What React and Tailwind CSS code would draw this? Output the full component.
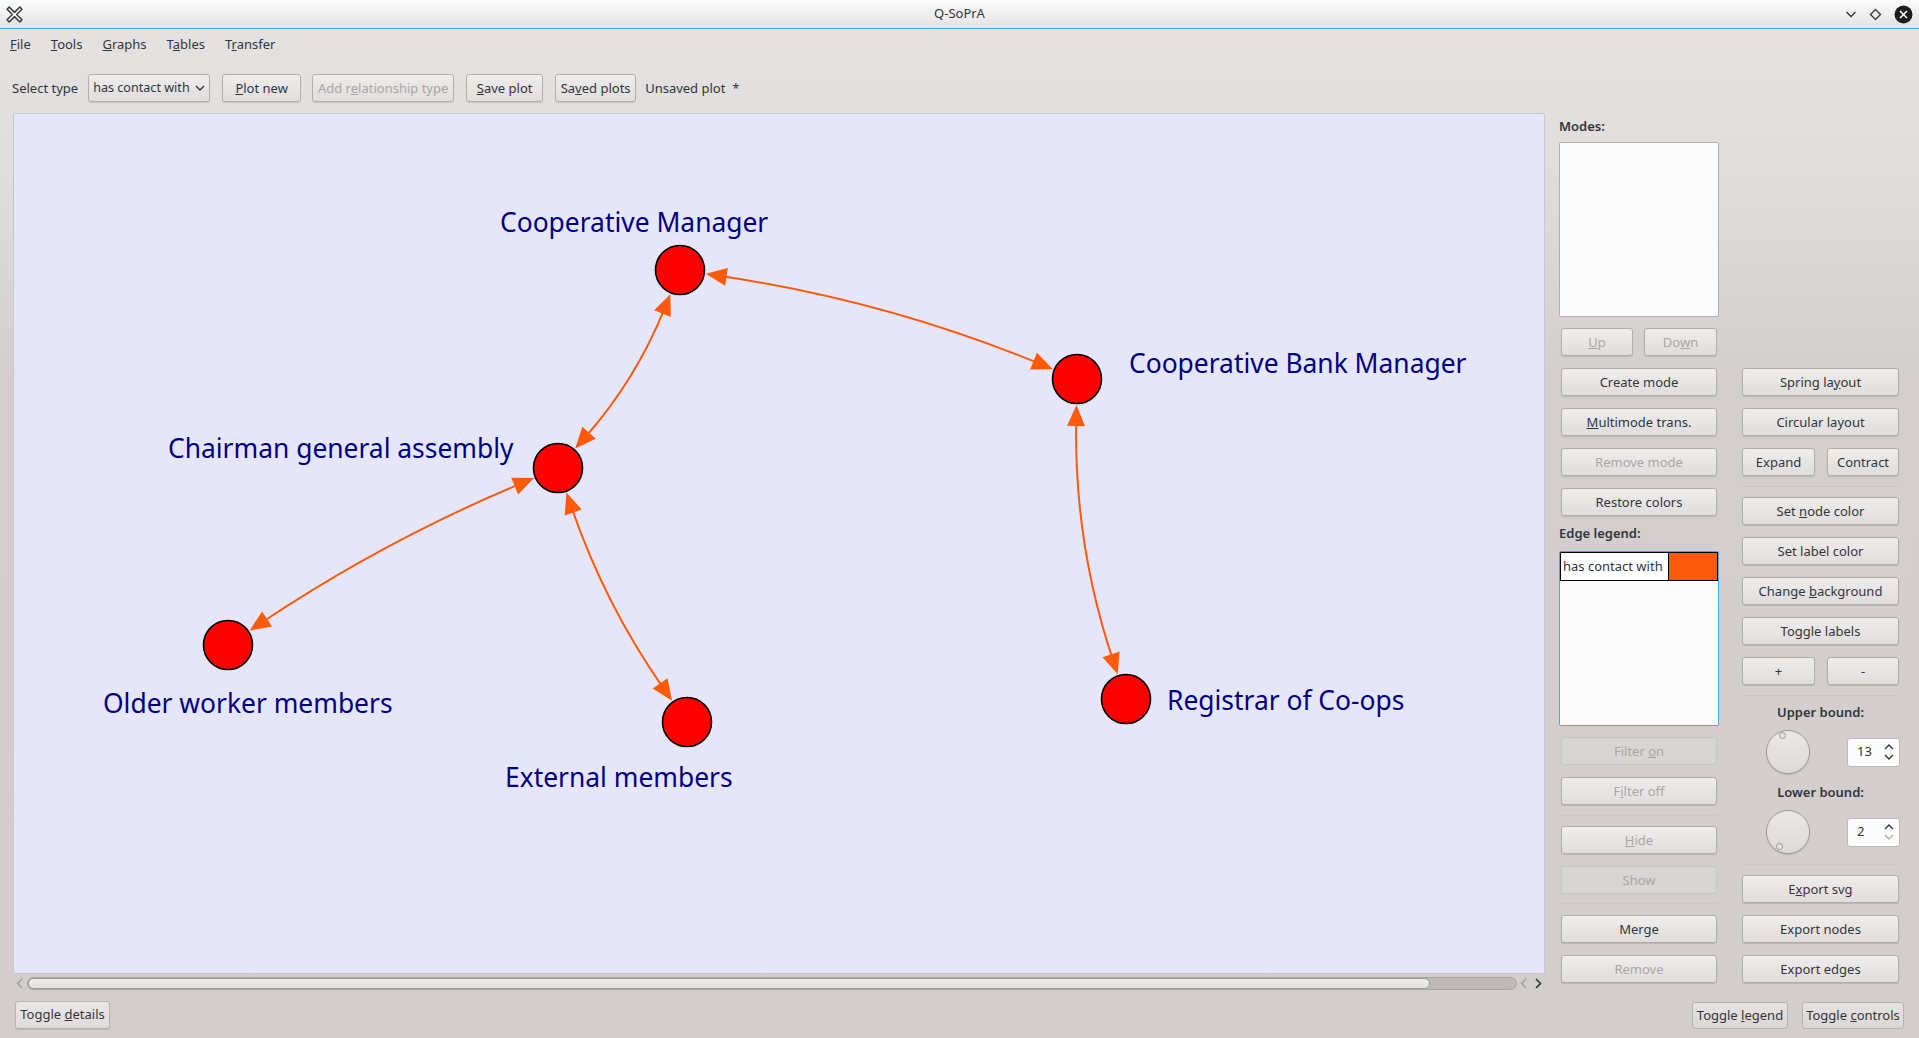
import clsx from 'clsx';

// node centres in window coordinates
const nodes = {
  cm: { x: 680, y: 270, label: 'Cooperative Manager', lx: 500, ly: 232 },
  cbm: { x: 1077, y: 379, label: 'Cooperative Bank Manager', lx: 1129, ly: 373 },
  ch: { x: 558, y: 468, label: 'Chairman general assembly', lx: 168, ly: 458 },
  old: { x: 228, y: 645, label: 'Older worker members', lx: 103, ly: 713 },
  ext: { x: 687, y: 722, label: 'External members', lx: 505, ly: 787 },
  reg: { x: 1126, y: 699, label: 'Registrar of Co-ops', lx: 1167, ly: 710 },
};

const edges = [
  ['cm', 'cbm', -25],
  ['cm', 'ch', -20],
  ['ch', 'old', 18],
  ['ch', 'ext', 20],
  ['cbm', 'reg', 28],
];

const R = 26;
const EDGE = '#ff5a0a';

function edgeGeom(a, b, h) {
  const A = nodes[a];
  const B = nodes[b];
  const dx = B.x - A.x;
  const dy = B.y - A.y;
  const L = Math.hypot(dx, dy);
  const cx = (A.x + B.x) / 2 + (-dy / L) * h;
  const cy = (A.y + B.y) / 2 + (dx / L) * h;

  const end = (n) => {
    const vx = n.x - cx;
    const vy = n.y - cy;
    const l = Math.hypot(vx, vy);
    const ux = vx / l;
    const uy = vy / l;
    const tx = n.x - ux * R;
    const ty = n.y - uy * R;
    const bx = tx - ux * 21;
    const by = ty - uy * 21;
    const pts = `${tx},${ty} ${bx - uy * 9},${by + ux * 9} ${bx + uy * 9},${by - ux * 9}`;
    return { bx: tx - ux * 15, by: ty - uy * 15, pts };
  };

  const s = end(A);
  const e = end(B);
  return { d: `M${s.bx},${s.by} Q${cx},${cy} ${e.bx},${e.by}`, heads: [s.pts, e.pts] };
}

const Btn = ({ children, disabled, flat, className = '' }) => (
  <button
    className={clsx(
      'flex h-[28px] items-center justify-center rounded-[3px] border text-[13px] leading-none',
      disabled ? 'text-[#a9a6a5]' : 'text-[#31363b]',
      flat
        ? 'border-[#c9c4c2] bg-[#d9d5d4]'
        : 'border-[#b3aeac] bg-gradient-to-b from-[#efedec] to-[#e0dddc] shadow-[0_1px_1px_rgba(0,0,0,0.12)]',
      className
    )}
  >
    {children}
  </button>
);

const Sep = () => <div className="h-px bg-[#cbc5c4]" />;

const Dial = ({ notch }) => (
  <div className="relative h-[44px] w-[44px] rounded-full border border-[#a29d9b] bg-gradient-to-b from-[#ebe9e8] to-[#dcd9d8] shadow-[0_1px_1px_rgba(0,0,0,0.15)]">
    <div
      className={clsx(
        'absolute h-[7px] w-[7px] rounded-full border border-[#9d9896] bg-[#e4e1e0]',
        notch === 'top' ? 'left-[12px] top-[1px]' : 'left-[9px] top-[32px]'
      )}
    />
  </div>
);

const Spin = ({ value, downOff }) => (
  <div className="flex h-[29px] w-[53px] items-center justify-between rounded-[3px] border border-[#bdb8b6] bg-[#fcfcfc] pl-[9px] pr-[5px] text-[13px] text-[#31363b]">
    <span>{value}</span>
    <svg width="10" height="18" viewBox="0 0 10 18" fill="none" strokeWidth="1.4">
      <path d="M1 6 L5 2 L9 6" stroke="#31363b" />
      <path d="M1 12 L5 16 L9 12" stroke={downOff ? '#b0acab' : '#31363b'} />
    </svg>
  </div>
);

const Chevron = ({ dir, color }) => (
  <svg width="14" height="13" viewBox="0 0 14 13" fill="none">
    <path
      d={dir === 'left' ? 'M9 2 L4.5 6.5 L9 11' : 'M5 2 L9.5 6.5 L5 11'}
      stroke={color}
      strokeWidth="1.6"
    />
  </svg>
);

export default function App() {
  return (
    <div className="flex h-[1038px] w-[1919px] flex-col overflow-hidden bg-[linear-gradient(180deg,#e5e3e2_0px,#e0dddc_160px,#d4cfce_380px,#d3cdcc_100%)] font-['Noto_Sans',sans-serif] text-[13px] text-[#31363b]">
      {/* title bar */}
      <div className="relative flex h-[29px] shrink-0 items-center justify-between border-b border-[#3daee9] bg-gradient-to-b from-[#fcfcfc] to-[#e4e2e1] px-[6px]">
        <svg width="17" height="17" viewBox="0 0 16 16">
          <path
            d="M1 3 L3 1 L8 6 L13 1 L15 3 L10 8 L15 13 L13 15 L8 10 L3 15 L1 13 L6 8 Z"
            fill="#fff"
            stroke="#31363b"
            strokeWidth="1.4"
            strokeLinejoin="round"
          />
        </svg>
        <div className="absolute inset-x-0 text-center text-[13px]">Q-SoPrA</div>
        <div className="relative flex items-center gap-[12px]">
          <svg width="12" height="12" viewBox="0 0 12 12" fill="none">
            <path d="M1.5 4 L6 8.5 L10.5 4" stroke="#31363b" strokeWidth="1.3" />
          </svg>
          <svg width="13" height="13" viewBox="0 0 13 13" fill="none">
            <path d="M6.5 1.5 L11.5 6.5 L6.5 11.5 L1.5 6.5 Z" stroke="#31363b" strokeWidth="1.3" />
          </svg>
          <svg width="19" height="19" viewBox="0 0 19 19">
            <circle cx="9.5" cy="9.5" r="9" fill="#1b1d1f" />
            <path d="M6 6 L13 13 M13 6 L6 13" stroke="#fff" strokeWidth="1.6" />
          </svg>
        </div>
      </div>

      {/* menu bar */}
      <div className="flex h-[29px] shrink-0 items-center gap-[20px] pl-[10px] pt-[2px]">
        <span><u>F</u>ile</span>
        <span><u>T</u>ools</span>
        <span><u>G</u>raphs</span>
        <span>T<u>a</u>bles</span>
        <span>T<u>r</u>ansfer</span>
      </div>

      {/* toolbar */}
      <div className="flex h-[55px] shrink-0 items-start pl-[12px] pt-[16px]">
        <span className="mt-[5px]">Select type</span>
        <button className="ml-[10px] flex h-[28px] w-[122px] items-center justify-between rounded-[3px] border border-[#b3aeac] bg-gradient-to-b from-[#efedec] to-[#e0dddc] pl-[4px] pr-[4px] text-[12.6px] shadow-[0_1px_1px_rgba(0,0,0,0.12)]">
          <span>has contact with</span>
          <svg width="10" height="8" viewBox="0 0 10 8" fill="none">
            <path d="M1 2 L5 6 L9 2" stroke="#31363b" strokeWidth="1.4" />
          </svg>
        </button>
        <Btn className="ml-[12px] w-[79px]"><span><u>P</u>lot new</span></Btn>
        <Btn disabled className="ml-[11px] w-[142px]"><span>Add r<u>e</u>lationship type</span></Btn>
        <Btn className="ml-[12px] w-[77px]"><span><u>S</u>ave plot</span></Btn>
        <Btn className="ml-[12px] w-[81px]"><span>Sa<u>v</u>ed plots</span></Btn>
        <span className="ml-[9px] mt-[5px]">Unsaved plot&nbsp; *</span>
      </div>

      {/* main */}
      <div className="flex min-h-0 flex-1">
        <div className="flex w-[1545px] shrink-0 flex-col pl-[13px]">
          <div className="h-[861px] overflow-hidden rounded-[2px] border border-[#c8c6d6] bg-[#e6e6fa]">
            <svg width="1530" height="859" className="block">
              <g transform="translate(-14,-114)">
                {edges.map(([a, b, h]) => {
                  const g = edgeGeom(a, b, h);
                  return (
                    <g key={a + b}>
                      <path d={g.d} fill="none" stroke={EDGE} strokeWidth="2" />
                      {g.heads.map((p) => (
                        <polygon key={p} points={p} fill={EDGE} />
                      ))}
                    </g>
                  );
                })}
                {Object.entries(nodes).map(([k, n]) => (
                  <g key={k}>
                    <circle cx={n.x} cy={n.y} r="24.5" fill="#ff0000" stroke="#000" strokeWidth="1.6" />
                    <text
                      x={n.lx}
                      y={n.ly}
                      fill="#000080"
                      fontSize="26.4"
                      fontFamily="'Noto Sans', sans-serif"
                    >
                      {n.label}
                    </text>
                  </g>
                ))}
              </g>
            </svg>
          </div>
          {/* scrollbar */}
          <div className="mt-[3px] flex h-[13px] items-center">
            <Chevron dir="left" color="#a7a3a2" />
            <div className="h-[13px] flex-1 rounded-full border border-[#aaa4a2] bg-[#bfb9b8]">
              <div className="h-full w-[1402px] rounded-full border border-[#9f9997] bg-gradient-to-b from-[#f1efee] to-[#e2dfde]" />
            </div>
            <Chevron dir="left" color="#a7a3a2" />
            <Chevron dir="right" color="#31363b" />
          </div>
          <div className="mt-[11px] flex">
            <button className="ml-[2px] flex h-[28px] w-[95px] items-center justify-center rounded-[3px] border border-[#b8b3b1] bg-gradient-to-b from-[#eae8e7] to-[#dedbda] text-[13px] shadow-[0_1px_1px_rgba(0,0,0,0.1)]">
              <span>Toggle <u>d</u>etails</span>
            </button>
          </div>
        </div>

        {/* right panel */}
        <div className="flex flex-1 flex-col">
          <div className="flex pl-[14px]">
            {/* left column */}
            <div className="flex w-[160px] flex-col pt-[5px]">
              <div className="h-[16px] font-semibold leading-[16px]">Modes:</div>
              <div className="mt-[8px] h-[175px] rounded-[2px] border border-[#b4afad] bg-[#fbfbfb]" />
              <div className="mt-[11px] flex justify-between px-[2px]">
                <Btn disabled className="w-[72px]"><span><u>U</u>p</span></Btn>
                <Btn disabled className="w-[73px]"><span>Do<u>w</u>n</span></Btn>
              </div>
              <div className="mt-[12px] flex flex-col gap-[12px] px-[2px]">
                <Btn>Create mode</Btn>
                <Btn><span><u>M</u>ultimode trans.</span></Btn>
                <Btn disabled>Remove mode</Btn>
                <Btn>Restore colors</Btn>
              </div>
              <div className="mt-[9px] h-[16px] font-semibold leading-[16px]">Edge legend:</div>
              <div className="mt-[10px] h-[175px] overflow-hidden rounded-[2px] border border-[#3daee9] bg-[#fcfcfc]">
                <div className="flex h-[29px]">
                  <div className="flex w-[109px] items-center border border-black bg-white pl-[2px] text-[13px]">
                    has contact with
                  </div>
                  <div className="flex-1 border-y border-r border-black bg-[#ff5a0a]" />
                </div>
              </div>
              <div className="mt-[11px] flex flex-col px-[2px]">
                <Btn disabled flat><span>Filter <u>o</u>n</span></Btn>
                <Btn disabled className="mt-[12px]"><span>F<u>i</u>lter off</span></Btn>
                <div className="mt-[10px]"><Sep /></div>
                <Btn disabled className="mt-[10px]"><span><u>H</u>ide</span></Btn>
                <Btn disabled flat className="mt-[12px]">Show</Btn>
                <div className="mt-[9px]"><Sep /></div>
                <Btn className="mt-[11px]">Merge</Btn>
                <Btn disabled className="mt-[12px]">Remove</Btn>
              </div>
            </div>

            {/* right column */}
            <div className="ml-[23px] flex w-[157px] flex-col pt-[255px]">
              <div className="flex flex-col gap-[12px]">
                <Btn><span>Spring la<u>y</u>out</span></Btn>
                <Btn>Circular layout</Btn>
                <div className="flex justify-between">
                  <Btn className="w-[73px]">Expand</Btn>
                  <Btn className="w-[72px]">Contract</Btn>
                </div>
              </div>
              <div className="mt-[10px]"><Sep /></div>
              <div className="mt-[10px] flex flex-col gap-[12px]">
                <Btn><span>Set <u>n</u>ode color</span></Btn>
                <Btn>Set label color</Btn>
                <Btn><span>Change <u>b</u>ackground</span></Btn>
                <Btn>Toggle labels</Btn>
                <div className="flex justify-between">
                  <Btn className="w-[73px]">+</Btn>
                  <Btn className="w-[72px]">-</Btn>
                </div>
              </div>
              <div className="mt-[10px]"><Sep /></div>
              <div className="mt-[8px] h-[16px] text-center font-semibold leading-[16px]">Upper bound:</div>
              <div className="mt-[10px] flex h-[44px] items-center">
                <div className="ml-[24px]"><Dial notch="top" /></div>
                <div className="ml-[37px]"><Spin value="13" /></div>
              </div>
              <div className="mt-[10px] h-[16px] text-center font-semibold leading-[16px]">Lower bound:</div>
              <div className="mt-[10px] flex h-[44px] items-center">
                <div className="ml-[24px]"><Dial notch="bottom" /></div>
                <div className="ml-[37px]"><Spin value="2" downOff /></div>
              </div>
              <div className="mt-[10px]"><Sep /></div>
              <div className="mt-[10px] flex flex-col gap-[12px]">
                <Btn><span>E<u>x</u>port svg</span></Btn>
                <Btn>Export nodes</Btn>
                <Btn>Export edges</Btn>
              </div>
            </div>
          </div>

          <div className="mt-[19px] flex justify-end gap-[14px] pr-[15px]">
            <button className="flex h-[27px] w-[96px] items-center justify-center rounded-[3px] border border-[#b8b3b1] bg-gradient-to-b from-[#e6e3e2] to-[#dad6d5] text-[13px]">
              <span>Toggle <u>l</u>egend</span>
            </button>
            <button className="flex h-[27px] w-[102px] items-center justify-center rounded-[3px] border border-[#b8b3b1] bg-gradient-to-b from-[#e6e3e2] to-[#dad6d5] text-[13px]">
              <span>Toggle <u>c</u>ontrols</span>
            </button>
          </div>
        </div>
      </div>
    </div>
  );
}
